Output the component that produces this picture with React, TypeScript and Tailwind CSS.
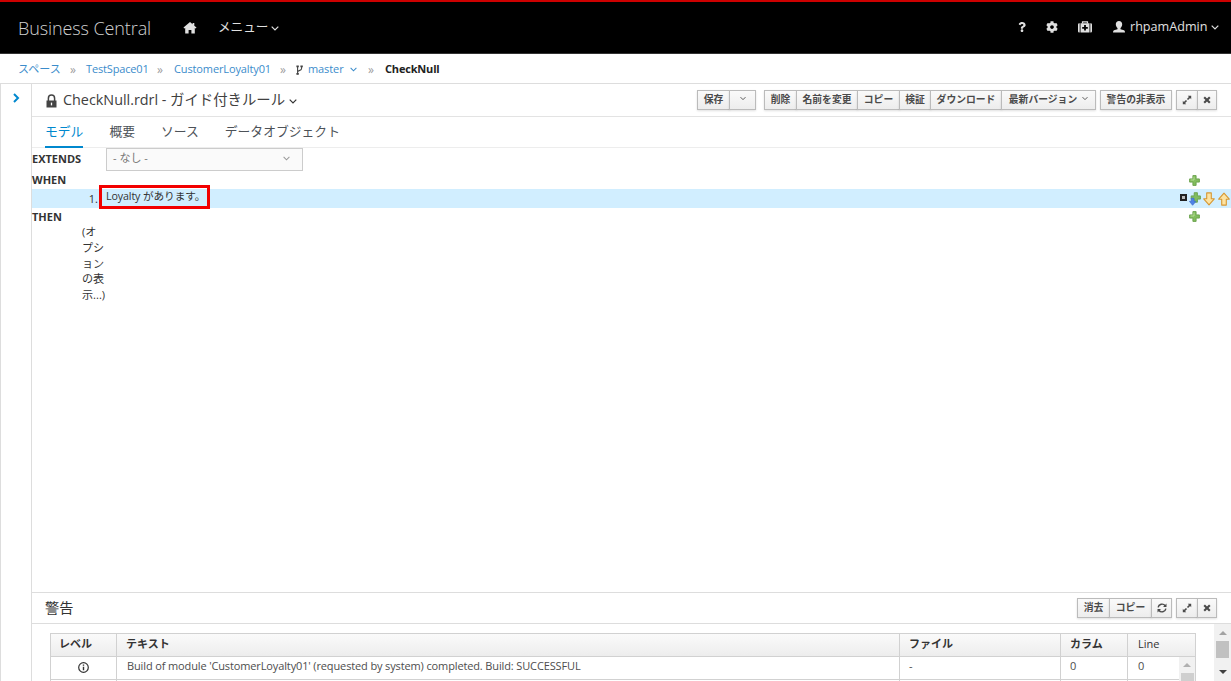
import type { ReactNode } from "react";
import { FaQuestion, FaCog } from "react-icons/fa";

interface IconProps {
    className?: string;
}

function ChevronDown({ className = "" }: IconProps) {
    return (
        <svg viewBox="0 0 8 5" fill="none" stroke="currentColor" strokeWidth="1.2" className={`h-[5px] w-2 shrink-0 ${className}`}>
            <path d="M0.7 0.7L4 4L7.3 0.7" />
        </svg>
    );
}

function HomeIcon({ className = "" }: IconProps) {
    return (
        <svg viewBox="0 0 14 12" fill="currentColor" className={className}>
            <path d="M7 0L0.5 5.6L1.2 6.6L2.2 6.1V11.5H5.6V8H8.4V11.5H11.8V6.1L12.8 6.6L13.5 5.6L11.3 3.7V1H9.6V2.2Z" />
        </svg>
    );
}

function LockIcon({ className = "" }: IconProps) {
    return (
        <svg viewBox="0 0 11 14" className={className}>
            <path d="M2.4 7V4.2Q2.4 1 5.5 1Q8.6 1 8.6 4.2V7" fill="none" stroke="currentColor" strokeWidth="1.5" />
            <path d="M0.5 6.5H10.5V13.5H0.5Z" fill="currentColor" />
            <path d="M5.5 8.6V11.4" stroke="#fff" strokeWidth="1.3" />
        </svg>
    );
}

function BranchIcon({ className = "" }: IconProps) {
    return (
        <svg viewBox="0 0 7 10" fill="none" stroke="currentColor" strokeWidth="1.1" className={className}>
            <path d="M1.6 1V9.2M5.6 1.6V3.2Q5.6 5 3.8 5.4Q1.6 5.9 1.6 7.4" />
            <path d="M0.4 1.4H2.8M4.4 1.4H6.8M0.4 8.9H2.8" strokeWidth="1.6" />
        </svg>
    );
}

function MedkitIcon({ className = "" }: IconProps) {
    return (
        <svg viewBox="0 0 14 12" className={className}>
            <path d="M4.5 2.5V0.8H9.5V2.5" fill="none" stroke="currentColor" strokeWidth="1.2" />
            <path d="M0 3.5Q0 2.2 1.2 2.2H1.7V11.5H1.2Q0 11.5 0 10.3ZM2.5 2.2H11.5V11.5H2.5ZM12.3 2.2H12.8Q14 2.2 14 3.5V10.3Q14 11.5 12.8 11.5H12.3Z" fill="currentColor" />
            <path d="M6.1 4H7.9V5.9H9.8V7.7H7.9V9.6H6.1V7.7H4.2V5.9H6.1Z" fill="#000" />
        </svg>
    );
}

function UserIcon({ className = "" }: IconProps) {
    return (
        <svg viewBox="0 0 12 12" fill="currentColor" className={className}>
            <path d="M6 0C8 0 9.2 1.4 9.2 3.2C9.2 5 8.2 6.3 7.5 7V8.2L11 9.2Q12 9.6 12 11.5H0Q0 9.6 1 9.2L4.5 8.2V7C3.8 6.3 2.8 5 2.8 3.2C2.8 1.4 4 0 6 0Z" />
        </svg>
    );
}

function ExpandIcon() {
    return (
        <svg viewBox="0 0 10 10" className="h-[10px] w-[10px]" fill="currentColor">
            <path d="M5.8 0.8H9.2V4.2L8.1 3.1L6.1 5.1L4.9 3.9L6.9 1.9ZM4.2 9.2H0.8V5.8L1.9 6.9L3.9 4.9L5.1 6.1L3.1 8.1Z" />
        </svg>
    );
}

function CloseIcon() {
    return (
        <svg viewBox="0 0 8 8" className="h-2 w-2" fill="none" stroke="currentColor" strokeWidth="2.1">
            <path d="M1.2 1.2L6.8 6.8M6.8 1.2L1.2 6.8" />
        </svg>
    );
}

function RefreshIcon() {
    return (
        <svg viewBox="0 0 10 10" className="h-[10px] w-[10px]" fill="none" stroke="currentColor" strokeWidth="1.4">
            <path d="M1.1 4.4A4 4 0 0 1 8.2 2.7M8.9 5.6A4 4 0 0 1 1.8 7.3" />
            <path d="M9.5 0.6V4.1H6ZM0.5 9.4V5.9H4Z" fill="currentColor" stroke="none" />
        </svg>
    );
}

function PlusIcon() {
    return (
        <svg viewBox="0 0 11 11" className="h-[11px] w-[11px] shrink-0">
            <path d="M3.9 0.6H7.1V3.9H10.4V7.1H7.1V10.4H3.9V7.1H0.6V3.9H3.9Z" fill="#82bd5e" stroke="#68a04a" strokeWidth="0.9" strokeLinejoin="round" />
            <path d="M5 1.6V5H1.6" fill="none" stroke="#b4dc92" strokeWidth="1" />
        </svg>
    );
}

function AddBelowIcon() {
    return (
        <svg viewBox="0 0 12 14" className="h-[14px] w-3 shrink-0">
            <path d="M5.2 0.7H8.4V3.9H11.4V7.1H8.4V10.2H5.2V7.1H2.2V3.9H5.2Z" fill="#82bd5e" stroke="#68a04a" strokeWidth="0.9" strokeLinejoin="round" />
            <path d="M2.2 6.2H5V9.3H7L3.6 13.3L0.4 9.3H2.2Z" fill="#4f83e6" stroke="#3f6fce" strokeWidth="0.7" strokeLinejoin="round" />
        </svg>
    );
}

function ArrowIcon({ className = "" }: IconProps) {
    return (
        <svg viewBox="0 0 12 14" className={`h-[14px] w-3 shrink-0 ${className}`}>
            <path d="M3.7 0.9H8.3V6.8H11.3L6 12.9L0.7 6.8H3.7Z" fill="#fde3a2" stroke="#d69834" strokeWidth="1.1" strokeLinejoin="round" />
        </svg>
    );
}

function InfoIcon() {
    return (
        <svg viewBox="0 0 11 11" className="h-[11px] w-[11px]" fill="none" stroke="#333" strokeWidth="1.2">
            <circle cx="5.5" cy="5.5" r="4.8" />
            <path d="M5.5 2.4V3.7M5.5 4.7V8.3" strokeWidth="1.4" />
        </svg>
    );
}

interface ToolButtonProps {
    className: string;
    label?: string;
    children?: ReactNode;
}

function ToolButton({ className, label, children }: ToolButtonProps) {
    return (
        <button
            type="button"
            aria-label={label}
            className={`flex h-5 items-center justify-center whitespace-nowrap border border-[#bbb] bg-linear-to-b from-[#fafafa] to-[#ededed] text-[9.8px] font-semibold leading-none text-[#4a4a4a] shadow-[0_1px_2px_rgba(3,3,3,0.12)] ${className}`}
        >
            {children}
        </button>
    );
}

function Separator({ className = "" }: IconProps) {
    return <span className={`text-[12px] leading-none text-[#9c9c9c] ${className}`}>»</span>;
}

const messages = [
    {
        text: "Build of module 'CustomerLoyalty01' (requested by system) completed. Build: SUCCESSFUL",
        file: "-",
        column: "0",
        line: "0",
    },
];

export default function App() {
    return (
        <div className="flex h-[681px] w-[1231px] flex-col overflow-hidden bg-white font-['Open_Sans','Noto_Sans_CJK_JP',sans-serif] text-[11px] text-[#333]">
            <header className="flex h-[54px] shrink-0 items-center border-t-2 border-b border-t-[#c00] border-b-[#333] bg-black pl-[18px] pr-3 text-[#e0e0e0]">
                <span className="w-[165px] whitespace-nowrap pt-0.5 text-[18px] font-light tracking-[-0.1px] text-[#d1d1d1]">Business Central</span>
                <HomeIcon className="h-3 w-[14px]" />
                <span className="ml-[21px] whitespace-nowrap text-[12.6px]">メニュー</span>
                <ChevronDown className="ml-[3px] mt-0.5" />
                <div className="ml-auto flex items-center pb-px">
                    <FaQuestion className="h-[10px] w-[10px]" />
                    <FaCog className="ml-[19px] h-3 w-3" />
                    <MedkitIcon className="ml-5 h-3 w-[14px]" />
                    <UserIcon className="ml-[21px] h-3 w-3" />
                    <span className="ml-[5px] w-[78px] whitespace-nowrap text-[12.6px]">rhpamAdmin</span>
                    <ChevronDown className="ml-[3px] mt-0.5" />
                </div>
            </header>

            <nav className="flex h-[30px] shrink-0 items-center border-b border-[#ddd] pl-[18px] pt-0.5 whitespace-nowrap text-[#3b8ccb]">
                <span className="w-[43px]">スペース</span>
                <Separator className="ml-[9px] w-4" />
                <span className="w-[63px] tracking-[-0.15px]">TestSpace01</span>
                <Separator className="ml-2 w-[17px]" />
                <span className="w-[97px] tracking-[-0.12px]">CustomerLoyalty01</span>
                <Separator className="ml-[9px] w-4" />
                <BranchIcon className="h-[10px] w-[7px] text-[#444]" />
                <span className="ml-[5px] w-[37px] tracking-[-0.1px]">master</span>
                <ChevronDown className="ml-[5px] h-1 w-[7px]" />
                <Separator className="ml-[11px] w-[17px]" />
                <span className="font-bold tracking-[-0.18px] text-[#222]">CheckNull</span>
            </nav>

            <div className="flex min-h-0 flex-1">
                <aside className="flex w-8 shrink-0 justify-center border-l border-r border-[#ddd] pt-[9px] text-[#0088ce]">
                    <svg viewBox="0 0 7 10" className="h-[10px] w-[7px]" fill="none" stroke="currentColor" strokeWidth="2">
                        <path d="M1 1L5 5L1 9" />
                    </svg>
                </aside>

                <main className="flex min-w-0 flex-1 flex-col">
                    <div className="flex h-[33px] shrink-0 items-center border-b border-[#e3e3e3] pl-[14px] pr-[14px]">
                        <LockIcon className="mt-0.5 h-[14px] w-[11px] text-[#444]" />
                        <h1 className="ml-[6px] whitespace-nowrap text-[14.4px] tracking-[-0.02px] text-[#404040]">CheckNull.rdrl - ガイド付きルール</h1>
                        <ChevronDown className="ml-1 mt-0.5" />
                        <div className="ml-auto flex pb-px">
                            <ToolButton className="w-[33px]">保存</ToolButton>
                            <ToolButton className="-ml-px w-[27px]" label="保存メニュー">
                                <ChevronDown className="mb-0.5 h-1 w-[6px]" />
                            </ToolButton>
                            <ToolButton className="ml-2 w-[33px]">削除</ToolButton>
                            <ToolButton className="-ml-px w-[62px]">名前を変更</ToolButton>
                            <ToolButton className="-ml-px w-[43px]">コピー</ToolButton>
                            <ToolButton className="-ml-px w-[32px]">検証</ToolButton>
                            <ToolButton className="-ml-px w-[72px]">ダウンロード</ToolButton>
                            <ToolButton className="-ml-px w-[95px]">
                                最新バージョン
                                <ChevronDown className="mb-0.5 ml-[5px] h-1 w-[6px]" />
                            </ToolButton>
                            <ToolButton className="ml-1 w-[72px]">警告の非表示</ToolButton>
                            <ToolButton className="ml-1 w-[22px]" label="最大化">
                                <ExpandIcon />
                            </ToolButton>
                            <ToolButton className="-ml-px w-5" label="閉じる">
                                <CloseIcon />
                            </ToolButton>
                        </div>
                    </div>

                    <div className="flex h-[31px] shrink-0 gap-[26px] border-b border-[#ededed] pl-[13px] text-[12.8px] leading-[28px] text-[#4d5258]">
                        <span className="h-[31px] border-b-2 border-[#0088ce] text-[#0088ce]">モデル</span>
                        <span>概要</span>
                        <span>ソース</span>
                        <span>データオブジェクト</span>
                    </div>

                    <section className="min-h-0 flex-1">
                        <div className="flex h-[23px]">
                            <span className="w-[74px] pt-[2px] font-bold leading-[17px]">EXTENDS</span>
                            <div className="flex h-[23px] w-[197px] items-center justify-between border border-[#ccc] bg-[#fafafa] pb-0.5 pl-[6px] pr-3 text-[#777]">
                                - なし -
                                <ChevronDown className="h-1 w-[7px] text-[#999]" />
                            </div>
                        </div>
                        <div className="flex h-[18px] items-center justify-between pr-[31px]">
                            <span className="font-bold">WHEN</span>
                            <PlusIcon />
                        </div>
                        <div className="flex h-[19px] items-center bg-[#d1eeff] pr-px">
                            <span className="w-[66px] pt-0.5 text-right">1.</span>
                            <div className="-mb-1 -mt-2 ml-px flex h-6 w-[111px] shrink-0 items-center whitespace-nowrap border-[3px] border-[#f20000] pl-1">
                                <span className="text-[10.7px] tracking-[-0.12px]">Loyalty があります。</span>
                            </div>
                            <div className="ml-auto flex items-center">
                                <span className="mb-0.5 mr-0.5 flex h-[7px] w-[7px] items-center justify-center border-2 border-[#222] bg-[#bbb]" />
                                <AddBelowIcon />
                                <ArrowIcon className="ml-[2px]" />
                                <ArrowIcon className="ml-[3px] rotate-180" />
                            </div>
                        </div>
                        <div className="flex h-[17px] items-center justify-between pr-[31px]">
                            <span className="pt-px font-bold">THEN</span>
                            <PlusIcon />
                        </div>
                        <p className="-mt-px pl-[50px] text-[11.1px] leading-[15.8px]">
                            (オ<br />プシ<br />ョン<br />の表<br />示...)
                        </p>
                    </section>

                    <section className="flex h-[89px] shrink-0 flex-col border-t border-[#ddd]">
                        <div className="flex h-[31px] shrink-0 items-center border-b border-[#ddd] pl-[13px] pr-[14px]">
                            <h2 className="pb-px text-[14.2px]">警告</h2>
                            <div className="ml-auto flex">
                                <ToolButton className="w-[33px]">消去</ToolButton>
                                <ToolButton className="-ml-px w-[43px]">コピー</ToolButton>
                                <ToolButton className="-ml-px w-[21px]" label="更新">
                                    <RefreshIcon />
                                </ToolButton>
                                <ToolButton className="ml-1 w-[22px]" label="最大化">
                                    <ExpandIcon />
                                </ToolButton>
                                <ToolButton className="-ml-px w-5" label="閉じる">
                                    <CloseIcon />
                                </ToolButton>
                            </div>
                        </div>
                        <div className="flex min-h-0 flex-1 pl-[18px]">
                            <div className="mt-[9px] w-[1146px] border border-b-0 border-[#d1d1d1]">
                                <div className="grid h-[23px] grid-cols-[66px_783px_161px_67px_1fr] border-b border-[#d1d1d1] bg-linear-to-b from-[#fafafa] to-[#ededed] font-semibold leading-[20px]">
                                    <span className="border-r border-[#d1d1d1] pl-2">レベル</span>
                                    <span className="border-r border-[#d1d1d1] pl-[9px]">テキスト</span>
                                    <span className="border-r border-[#d1d1d1] pl-[9px]">ファイル</span>
                                    <span className="border-r border-[#d1d1d1] pl-[9px]">カラム</span>
                                    <span className="pl-[10px] font-medium">Line</span>
                                </div>
                                {messages.map((message) => (
                                    <div
                                        key={message.text}
                                        className="grid h-[23px] grid-cols-[66px_783px_161px_67px_1fr] border-b border-[#d1d1d1] leading-[18px] text-[#4d4d4d]"
                                    >
                                        <span className="flex items-center justify-center border-r border-[#d1d1d1] pb-[3px]">
                                            <InfoIcon />
                                        </span>
                                        <span className="border-r border-[#d1d1d1] pl-[10px] tracking-[-0.13px]">{message.text}</span>
                                        <span className="border-r border-[#d1d1d1] pl-[9px]">{message.file}</span>
                                        <span className="border-r border-[#d1d1d1] pl-[9px]">{message.column}</span>
                                        <span className="flex justify-between pl-[10px]">
                                            {message.line}
                                            <span className="flex h-6 w-4 flex-col items-center bg-[#f1f1f1] pt-1.5">
                                                <span className="border-x-[4px] border-b-[4px] border-x-transparent border-b-[#b0b0b0]" />
                                                <span className="mt-[6px] h-2 w-[13px] shrink-0 bg-[#cfcfcf]" />
                                            </span>
                                        </span>
                                    </div>
                                ))}
                                <div className="grid h-0.5 grid-cols-[66px_783px_161px_67px_1fr]">
                                    <span className="border-r border-[#d1d1d1]" />
                                    <span className="border-r border-[#d1d1d1]" />
                                    <span className="border-r border-[#d1d1d1]" />
                                    <span className="border-r border-[#d1d1d1]" />
                                </div>
                            </div>
                            <div className="ml-auto flex w-[17px] flex-col items-center bg-[#f1f1f1] pt-[7px]">
                                <span className="border-x-[4px] border-b-[4px] border-x-transparent border-b-[#a3a3a3]" />
                                <span className="mt-[6px] h-[17px] w-[13px] bg-[#c1c1c1]" />
                                <span className="mt-3 border-x-[4px] border-t-[4px] border-x-transparent border-t-[#404040]" />
                            </div>
                        </div>
                    </section>
                </main>
            </div>
        </div>
    );
}
